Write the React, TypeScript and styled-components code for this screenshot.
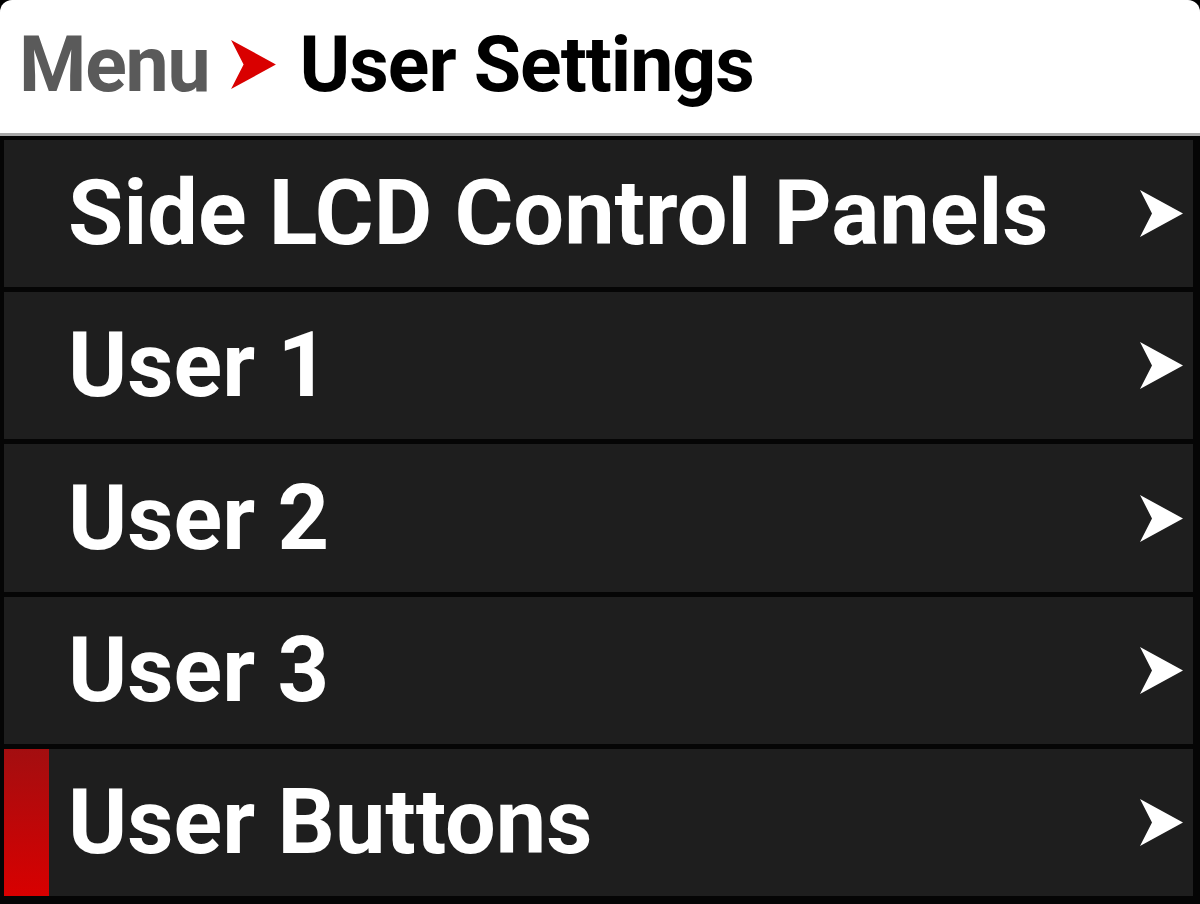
import styled, {createGlobalStyle} from "styled-components";

const GlobalStyle = createGlobalStyle`
    html, body {
        margin: 0;
        padding: 0;
        background: #000000;
    }

    * {
        box-sizing: border-box;
    }
`

const items = [
    {label: "Side LCD Control Panels", selected: false},
    {label: "User 1", selected: false},
    {label: "User 2", selected: false},
    {label: "User 3", selected: false},
    {label: "User Buttons", selected: true},
]

const Arrow = ({color, width, height}: { color: string, width: number, height: number }) =>
    <svg width={width} height={height} viewBox="0 0 43 47">
        <path d="M0 0 L43 23.5 L0 47 L12 23.5 Z" fill={color}/>
    </svg>

const App = () => {
    return <StyledScreen>
        <GlobalStyle/>
        <StyledHeader>
            <StyledCrumb>Menu</StyledCrumb>
            <Arrow color="#d90000" width={45} height={49}/>
            <StyledTitle>User Settings</StyledTitle>
        </StyledHeader>
        <StyledList>
            {items.map(item =>
                <StyledRow key={item.label}>
                    <StyledMarker $selected={item.selected}/>
                    <StyledLabel>{item.label}</StyledLabel>
                    <Arrow color="#ffffff" width={43} height={47}/>
                </StyledRow>
            )}
        </StyledList>
    </StyledScreen>
}

const StyledScreen = styled.div`
    width: 1200px;
    height: 904px;
    display: flex;
    flex-direction: column;
    background: #000000;
    font-family: Roboto, "Liberation Sans", sans-serif;
    font-weight: 700;
`

const StyledHeader = styled.div`
    height: 133px;
    flex-shrink: 0;
    background: #ffffff;
    border-radius: 12px 12px 0 0;
    padding: 0 0 4px 19px;
    display: flex;
    align-items: center;
    gap: 22px;
`

const StyledCrumb = styled.span`
    font-size: 77px;
    color: #5a5a5a;
    letter-spacing: -1.2px;
`

const StyledTitle = styled.span`
    font-size: 77px;
    color: #000000;
    letter-spacing: -1px;
    margin-left: 1px;
`

const StyledList = styled.div`
    flex: 1;
    border-top: 3px solid #a8a8a8;
    background: #050505;
    padding: 4px 7px 8px 4px;
    display: flex;
    flex-direction: column;
    gap: 5px;
`

const StyledRow = styled.div`
    flex: 1;
    background: #1e1e1e;
    display: flex;
    align-items: center;
    padding-right: 10px;
`

const StyledMarker = styled.div<{ $selected: boolean }>`
    width: 45px;
    align-self: stretch;
    flex-shrink: 0;
    background: ${props => props.$selected ? "linear-gradient(#a30e10, #d80000)" : "transparent"};
`

const StyledLabel = styled.span`
    flex: 1;
    padding-left: 19px;
    font-size: 90px;
    color: #ffffff;
`

export default App
